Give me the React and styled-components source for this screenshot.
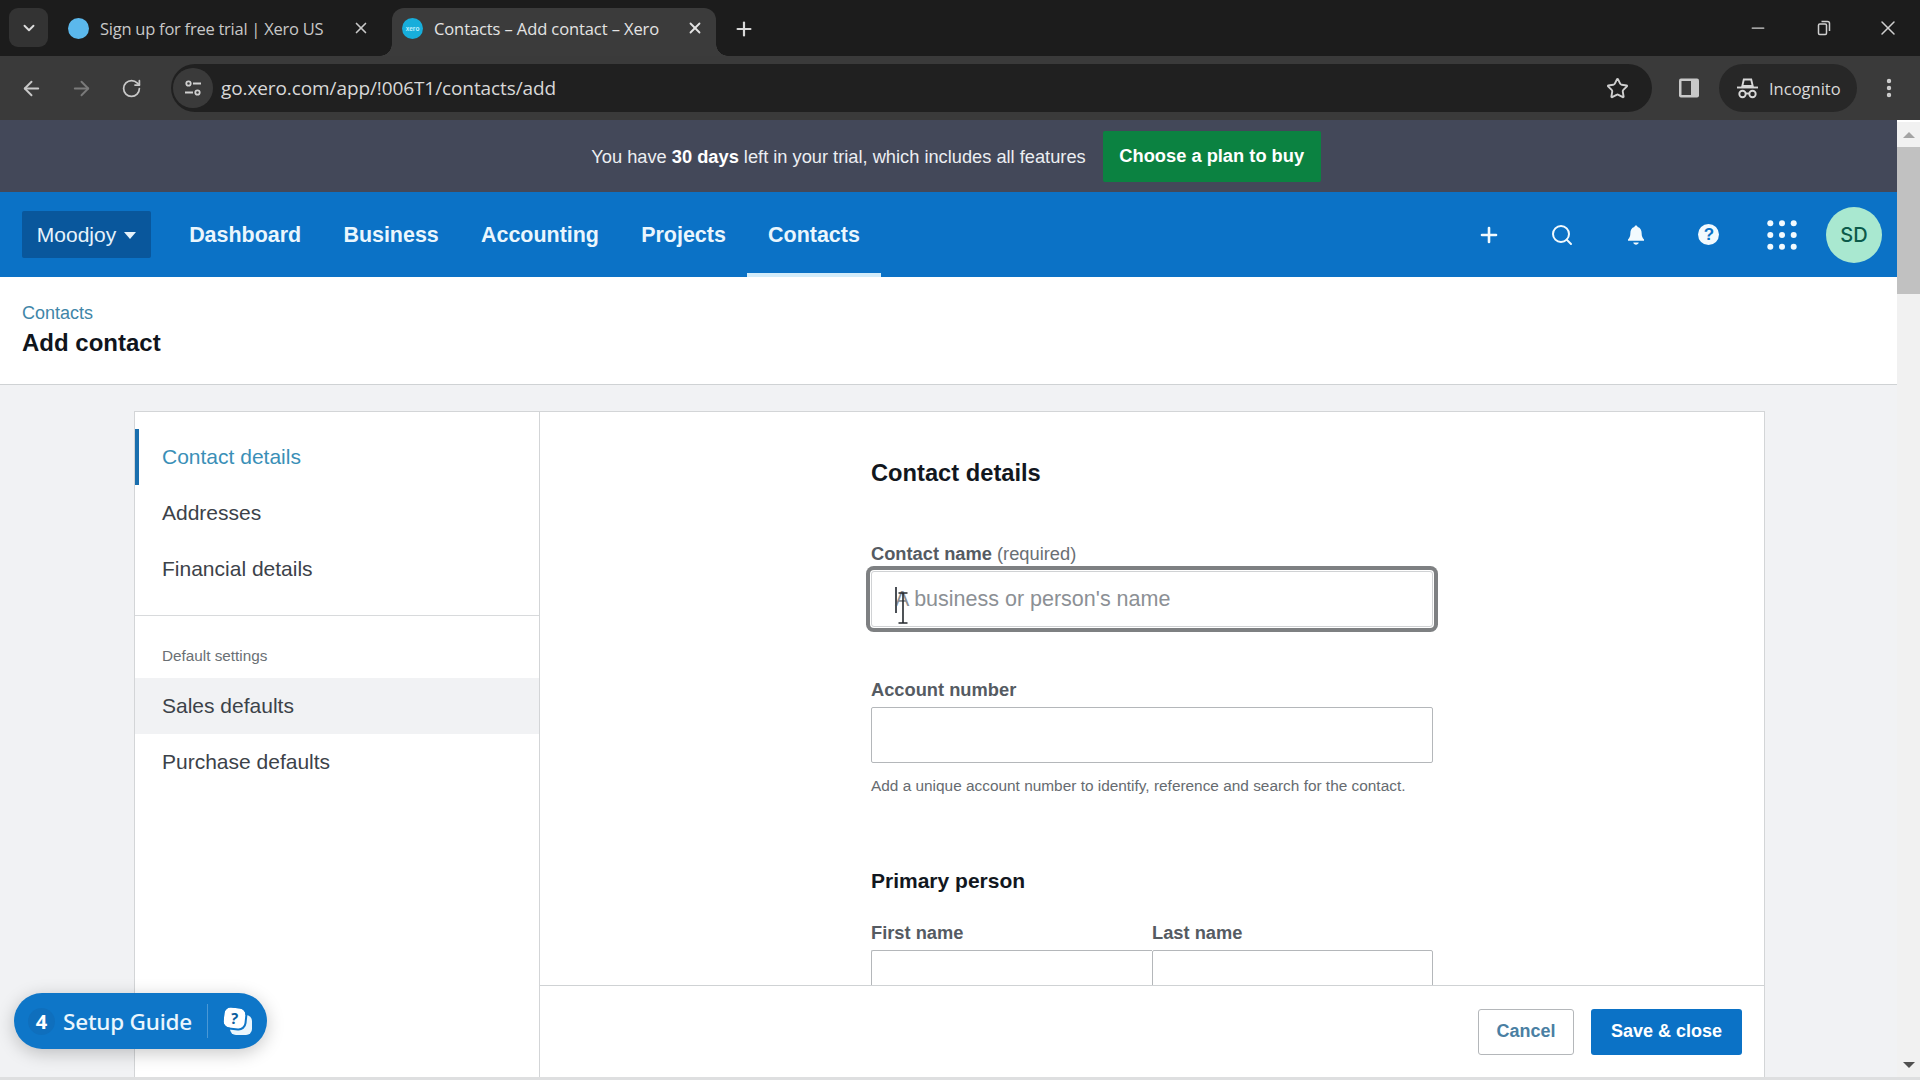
import styled, { createGlobalStyle } from 'styled-components';
import { ArrowLeft, ArrowRight, RotateCw, Star, X, Plus, Minus, ChevronDown, Search, EllipsisVertical } from 'lucide-react';

const GlobalStyle = createGlobalStyle`
  html, body { margin: 0; padding: 0; overflow: hidden; background: #fff; }
  * { box-sizing: border-box; }
`;

const Page = styled.div`
  width: 1920px;
  height: 1080px;
  display: flex;
  flex-direction: column;
  overflow: hidden;
  font-family: "Liberation Sans", Arial, sans-serif;
`;

/* browser chrome */
const TabStrip = styled.div`
  height: 56px;
  flex-shrink: 0;
  background: #1c1c1c;
  display: flex;
  align-items: flex-end;
  padding-left: 9px;
  color: #d4d4d4;
  font-family: "Open Sans", "Noto Sans", sans-serif;
`;

const TabMenu = styled.div`
  width: 39px;
  height: 39px;
  margin-bottom: 9px;
  border-radius: 9px;
  background: #333;
  display: flex;
  align-items: center;
  justify-content: center;
  color: #ddd;
`;

const Tab = styled.div`
  position: relative;
  width: 324px;
  height: 48px;
  display: flex;
  align-items: center;
  padding: 0 12px 8px 10px;
  margin-left: 10px;
  border-radius: 12px 12px 0 0;
  background: ${p => (p.$active ? '#3b3b3b' : 'transparent')};
  color: ${p => (p.$active ? '#e4e4e4' : '#c8c8c8')};
  ${p => p.$active && `
    &::before, &::after {
      content: '';
      position: absolute;
      bottom: 0;
      width: 12px;
      height: 12px;
    }
    &::before { left: -12px; background: radial-gradient(circle at 0 0, transparent 11.5px, #3b3b3b 12px); }
    &::after { right: -12px; background: radial-gradient(circle at 100% 0, transparent 11.5px, #3b3b3b 12px); }
  `}
`;

const Favicon = styled.span`
  width: 21px;
  height: 21px;
  border-radius: 50%;
  flex-shrink: 0;
  background: ${p => (p.$active ? '#17aedb' : '#5bb8ec')};
  color: #bfeefb;
  font-size: 6.5px;
  font-weight: 700;
  display: flex;
  align-items: center;
  justify-content: center;
  font-family: "Liberation Sans", sans-serif;
`;

const TabTitle = styled.span`
  flex: 1;
  margin-left: 11px;
  font-size: 16.5px;
  letter-spacing: ${p => (p.$active ? '-0.1px' : '-0.25px')};
  white-space: nowrap;
  overflow: hidden;
`;

const NewTab = styled.span`
  margin: 0 0 3px 17px;
  height: 48px;
  display: flex;
  align-items: center;
  color: #d8d8d8;
`;

const WindowControls = styled.div`
  margin-left: auto;
  height: 56px;
  display: flex;
  align-items: center;
  padding: 0 20px 0 0;
  gap: 44px;
  color: #cfcfcf;
`;

const RestoreIcon = () => (
  <svg width="20" height="20" viewBox="-2 0 20 20" fill="none" stroke="currentColor" strokeWidth="1.5">
    <rect x="4.500" y="6" width="8" height="10.500" rx="1.200" />
    <path d="M7.500 3.500h6a2 2 0 0 1 2 2v7.500" />
  </svg>
);

const Toolbar = styled.div`
  height: 64px;
  flex-shrink: 0;
  background: #3a3a3a;
  display: flex;
  align-items: center;
  color: #c4c4c4;
  font-family: "Open Sans", "Noto Sans", sans-serif;
`;

const NavIcon = styled.span`
  width: 50px;
  height: 40px;
  display: flex;
  align-items: center;
  justify-content: center;
  color: ${p => (p.$dim ? '#7a7a7a' : '#c8c8c8')};
`;

const NavIcons = styled.div`
  display: flex;
  padding-left: 6px;
`;

const AddressBar = styled.div`
  margin-left: 15px;
  width: 1481px;
  height: 48px;
  border-radius: 24px;
  background: #202020;
  display: flex;
  align-items: center;
  padding: 0 23px 0 2px;
`;

const SiteIcon = styled.span`
  width: 40px;
  height: 40px;
  border-radius: 50%;
  background: #3a3a3a;
  display: flex;
  align-items: center;
  justify-content: center;
  color: #d0d0d0;
`;

const UrlText = styled.span`
  margin-left: 8px;
  font-size: 19px;
  letter-spacing: -0.1px;
  color: #d8d8d8;
  flex: 1;
`;

const ToolbarIcon = styled.span`
  display: flex;
  align-items: center;
  justify-content: center;
  color: #cfcfcf;
  margin: ${p => p.$margin || '0'};
`;

const IncognitoPill = styled.div`
  margin-left: 19px;
  width: 138px;
  height: 48px;
  border-radius: 24px;
  background: #272727;
  display: flex;
  align-items: center;
  padding-left: 17px;
  gap: 10px;
  font-size: 16.5px;
  color: #dadada;
`;

const TuneIcon = () => (
  <svg width="20" height="20" viewBox="0 0 20 20" fill="none" stroke="currentColor" strokeWidth="1.8">
    <circle cx="5.500" cy="5.500" r="2.200" />
    <path d="M10 5.500h8M2 14.500h8" />
    <circle cx="14.500" cy="14.500" r="2.200" />
  </svg>
);

const SidePanelIcon = () => (
  <svg width="22" height="22" viewBox="0 0 22 22">
    <rect x="1" y="1.500" width="20" height="19" rx="2" fill="#c8c8c8" />
    <rect x="3.500" y="4" width="9.500" height="14" fill="#3a3a3a" />
  </svg>
);

const IncognitoIcon = () => (
  <svg width="23" height="23" viewBox="0 0 23 23" fill="none" stroke="#d8d8d8" strokeWidth="1.900">
    <path d="M7.800 2.500h7.400l1.500 6.500H6.300z" />
    <path d="M1 10.500h21" />
    <circle cx="6.500" cy="17" r="3.200" />
    <circle cx="16.500" cy="17" r="3.200" />
    <path d="M9.700 16.500h3.600" />
  </svg>
);

/* app */
const Viewport = styled.div`
  flex: 1;
  min-height: 0;
  display: flex;
`;

const AppColumn = styled.div`
  flex: 1;
  min-width: 0;
  display: flex;
  flex-direction: column;
  position: relative;
  border-bottom: 3px solid #dedfe0;
`;

const Banner = styled.div`
  height: 72px;
  flex-shrink: 0;
  background: #434859;
  display: flex;
  align-items: center;
  justify-content: center;
  gap: 17px;
  padding-left: 15px;
  color: #eceef2;
  font-size: 18.25px;
  span { padding-top: 2px; }
  b { font-weight: 700; color: #fff; }
`;

const PlanButton = styled.div`
  width: 218px;
  height: 51px;
  background: #0b8241;
  color: #fff;
  font-weight: 700;
  font-size: 18.3px;
  display: flex;
  align-items: center;
  justify-content: center;
  border-radius: 2px;
`;

const TopNav = styled.div`
  height: 85px;
  flex-shrink: 0;
  background: #0b72c6;
  display: flex;
  align-items: center;
  padding: 0 15px 0 22px;
  color: #fff;
`;

const OrgButton = styled.div`
  width: 129px;
  height: 47px;
  background: #09579c;
  border-radius: 2px;
  display: flex;
  align-items: center;
  justify-content: center;
  gap: 8px;
  margin-right: 17px;
  font-size: 21px;
  color: #e6f3fb;
`;

const Caret = styled.span`
  width: 0;
  height: 0;
  margin-top: 2px;
  border-left: 6.500px solid transparent;
  border-right: 6.500px solid transparent;
  border-top: 7px solid #e6f3fb;
`;

const NavItem = styled.div`
  height: 85px;
  padding: 2px 21.150px 0;
  display: flex;
  align-items: center;
  font-size: 21.450px;
  font-weight: 700;
  color: #eaf6fd;
  border-bottom: 4px solid ${p => (p.$active ? '#d3ecfa' : 'transparent')};
  border-top: 4px solid transparent;
`;

const NavActions = styled.div`
  margin-left: auto;
  display: flex;
  align-items: center;
`;

const ActionIcon = styled.span`
  width: 73.400px;
  height: 56px;
  display: flex;
  align-items: center;
  justify-content: center;
  color: #f2fafe;
`;

const HelpBadge = styled.span`
  width: 21px;
  height: 21px;
  border-radius: 50%;
  background: #f2fafe;
  color: #0b72c6;
  font-size: 17px;
  font-weight: 700;
  display: flex;
  align-items: center;
  justify-content: center;
`;

const Avatar = styled.span`
  width: 56px;
  height: 56px;
  margin-left: 7px;
  border-radius: 50%;
  background: #a9e8d0;
  color: #0c5a4a;
  font-family: Inter, "Liberation Sans", sans-serif;
  font-size: 20px;
  font-weight: 500;
  display: flex;
  align-items: center;
  justify-content: center;
`;

const BellIcon = () => (
  <svg width="20" height="24" viewBox="0 0 22 24" fill="currentColor">
    <path d="M11 1.500c1 0 1.700.7 1.800 1.700 3 .8 4.400 3.400 4.400 6.600 0 3.500.9 5.400 2.600 7.200v1.400H2.200V17c1.700-1.800 2.600-3.700 2.600-7.200 0-3.200 1.400-5.800 4.400-6.600.1-1 .8-1.700 1.800-1.700z" />
    <path d="M8 20.200h6c-.3 1.500-1.500 2.400-3 2.400s-2.700-.9-3-2.400z" />
  </svg>
);

const GridIcon = () => (
  <svg width="30" height="30" viewBox="0 0 30 30" fill="currentColor">
    {[3.300, 15, 26.700].flatMap(y => [3.300, 15, 26.700].map(x => <circle key={`${x}-${y}`} cx={x} cy={y} r="3" />))}
  </svg>
);

const PageHead = styled.div`
  height: 108px;
  flex-shrink: 0;
  background: #fff;
  border-bottom: 1px solid #cfd2d4;
  padding: 25px 22px 0;
`;

const Breadcrumb = styled.div`
  font-size: 18px;
  line-height: 22px;
  color: #3f86a8;
`;

const PageTitle = styled.h1`
  margin: 4px 0 0;
  font-size: 24px;
  line-height: 30px;
  font-weight: 700;
  color: #10151c;
`;

const Workspace = styled.div`
  flex: 1;
  min-height: 0;
  background: #f1f2f4;
  padding: 26px 132px 0 134px;
  display: flex;
`;

const Card = styled.div`
  flex: 1;
  min-width: 0;
  display: flex;
  background: #fff;
  border: 1px solid #d3d5d7;
  border-bottom: 0;
`;

const Sidebar = styled.nav`
  width: 405px;
  flex-shrink: 0;
  border-right: 1px solid #d3d5d7;
`;

const SideGroup = styled.div`
  padding: 17px 0 18px;
  border-bottom: 1px solid #d8dadc;
`;

const SideItem = styled.div`
  height: 56px;
  display: flex;
  align-items: center;
  padding-left: 23px;
  font-size: 21px;
  color: ${p => (p.$active ? '#3a8fb7' : '#3c4249')};
  background: ${p => (p.$hover ? '#f1f2f4' : 'transparent')};
  border-left: 4px solid ${p => (p.$active ? '#1a6fae' : 'transparent')};
`;

const SideHeading = styled.div`
  padding: 30px 0 0 27px;
  height: 62px;
  font-size: 15.300px;
  line-height: 20px;
  color: #6a6f74;
`;

const MainPane = styled.div`
  flex: 1;
  min-width: 0;
  display: flex;
  flex-direction: column;
`;

const FormScroll = styled.div`
  flex: 1;
  min-height: 0;
  overflow: hidden;
  padding: 46px 0 0 331px;
`;

const Form = styled.div`
  width: 562px;
`;

const SectionTitle = styled.h2`
  margin: ${p => p.$top || '0'} 0 0;
  font-size: ${p => p.$size || '23.7px'};
  line-height: 30px;
  font-weight: 700;
  color: #12171e;
`;

const Label = styled.div`
  margin: ${p => p.$top || '0'} 0 ${p => p.$bottom || '7px'};
  font-size: 18.300px;
  line-height: 22px;
  font-weight: 700;
  color: #555b62;
  span { font-weight: 400; color: #6a6f74; }
`;

const InputBox = styled.div`
  position: relative;
  height: 56px;
  display: flex;
  align-items: center;
  padding-left: 23px;
  background: #fff;
  border: 1px solid #b4b7ba;
  border-radius: 2px;
  font-size: 21.500px;
  color: #8c9095;
  ${p => p.$focused && 'box-shadow: 0 0 0 1px #fff, 0 0 0 5px #7e8082; border-radius: 3px; border-color: #d0d2d4;'}
`;

const Caretline = styled.span`
  position: absolute;
  left: 23px;
  top: 15px;
  width: 2px;
  height: 26px;
  background: #4a4f55;
`;

const IBeam = styled.svg`
  position: absolute;
  left: 25px;
  top: 20px;
`;

const Hint = styled.div`
  margin-top: 13px;
  font-size: 15.400px;
  line-height: 20px;
  color: #666b70;
`;

const NameLabels = styled.div`
  display: grid;
  grid-template-columns: 281px 281px;
  margin-top: 26px;
`;

const NameInputs = styled.div`
  display: grid;
  grid-template-columns: 281px 281px;
  ${InputBox}:first-child { border-right: 0; border-radius: 2px 0 0 2px; }
`;

const Footer = styled.div`
  height: 92px;
  flex-shrink: 0;
  background: #fff;
  border-top: 1px solid #cfd2d4;
  display: flex;
  align-items: center;
  justify-content: flex-end;
  gap: 17px;
  padding: 0 22px 0 0;
`;

const FooterButton = styled.div`
  height: 46px;
  width: ${p => (p.$primary ? '151px' : '96px')};
  border-radius: 3px;
  display: flex;
  align-items: center;
  justify-content: center;
  font-size: 18px;
  font-weight: 700;
  background: ${p => (p.$primary ? '#0b72c6' : '#fff')};
  color: ${p => (p.$primary ? '#fff' : '#4a7fa3')};
  border: ${p => (p.$primary ? '0' : '1.5px solid #b4b7ba')};
`;

const SetupGuide = styled.div`
  position: absolute;
  left: 14px;
  bottom: 28px;
  width: 253px;
  height: 56px;
  border-radius: 28px;
  background: #0e76c8;
  color: #eaf6fd;
  box-shadow: 0 4px 18px rgba(0, 0, 0, 0.22);
  display: flex;
  align-items: center;
  padding-left: 14px;
  font-family: "Noto Sans", sans-serif;
`;

const GuideCount = styled.span`
  width: 27px;
  height: 27px;
  border-radius: 50%;
  background: #0f6fbd;
  font-size: 20px;
  font-weight: 700;
  color: #fff;
  display: flex;
  align-items: center;
  justify-content: center;
`;

const GuideLabel = styled.span`
  margin-left: 8px;
  font-size: 22.500px;
  font-weight: 500;
  letter-spacing: -0.2px;
`;

const GuideDivider = styled.span`
  width: 1px;
  height: 34px;
  margin-left: 15px;
  background: rgba(255, 255, 255, 0.25);
`;

const GuideIconWrap = styled.span`
  position: relative;
  width: 28px;
  height: 27px;
  margin-left: 16px;
`;

const GuideBack = styled.span`
  position: absolute;
  left: 6px;
  top: 7px;
  width: 22px;
  height: 20px;
  border-radius: 6px;
  background: #eaf6fd;
`;

const GuideFront = styled.span`
  position: absolute;
  left: 0;
  top: 0;
  width: 21px;
  height: 20px;
  border-radius: 6px;
  background: #fff;
  outline: 2px solid #0e76c8;
  transform: rotate(6deg);
  color: #0e5f9f;
  font-size: 15px;
  font-weight: 700;
  display: flex;
  align-items: center;
  justify-content: center;
`;

const ScrollRail = styled.div`
  width: 23px;
  flex-shrink: 0;
  margin-top: 2px;
  background: #f1f1f1;
  border-bottom: 3px solid #dedfe0;
  display: flex;
  flex-direction: column;
  align-items: stretch;
`;

const ScrollArrow = styled.span`
  height: 25px;
  display: flex;
  align-items: center;
  justify-content: center;
  margin-top: ${p => (p.$down ? 'auto' : '0')};
  &::before {
    content: '';
    border-left: 6px solid transparent;
    border-right: 6px solid transparent;
    ${p => (p.$down ? 'border-top: 6px solid #505050;' : 'border-bottom: 6px solid #a3a3a3;')}
  }
`;

const ScrollThumb = styled.div`
  height: 147px;
  background: #c1c1c1;
`;

export default function App() {
  return (
    <Page>
      <GlobalStyle />
      <TabStrip>
        <TabMenu><ChevronDown size={18} strokeWidth={2.5} /></TabMenu>
        <Tab>
          <Favicon />
          <TabTitle>Sign up for free trial | Xero US</TabTitle>
          <X size={18} strokeWidth={2.2} />
        </Tab>
        <Tab $active>
          <Favicon $active>xero</Favicon>
          <TabTitle $active>Contacts – Add contact – Xero</TabTitle>
          <X size={18} strokeWidth={2.4} />
        </Tab>
        <NewTab><Plus size={22} strokeWidth={2.4} /></NewTab>
        <WindowControls>
          <Minus size={20} strokeWidth={1.5} />
          <RestoreIcon />
          <X size={24} strokeWidth={1.5} />
        </WindowControls>
      </TabStrip>
      <Toolbar>
        <NavIcons>
          <NavIcon><ArrowLeft size={23} strokeWidth={2} /></NavIcon>
          <NavIcon $dim><ArrowRight size={23} strokeWidth={2} /></NavIcon>
          <NavIcon><RotateCw size={21} strokeWidth={2} /></NavIcon>
        </NavIcons>
        <AddressBar>
          <SiteIcon><TuneIcon /></SiteIcon>
          <UrlText>go.xero.com/app/!006T1/contacts/add</UrlText>
          <Star size={23} strokeWidth={2} color="#cfcfcf" />
        </AddressBar>
        <ToolbarIcon $margin="0 0 0 26px"><SidePanelIcon /></ToolbarIcon>
        <IncognitoPill><IncognitoIcon />Incognito</IncognitoPill>
        <ToolbarIcon $margin="0 0 0 20px"><EllipsisVertical size={24} strokeWidth={2.4} /></ToolbarIcon>
      </Toolbar>
      <Viewport>
        <AppColumn>
          <Banner>
            <span>You have <b>30 days</b> left in your trial, which includes all features</span>
            <PlanButton>Choose a plan to buy</PlanButton>
          </Banner>
          <TopNav>
            <OrgButton>Moodjoy<Caret /></OrgButton>
            <NavItem>Dashboard</NavItem>
            <NavItem>Business</NavItem>
            <NavItem>Accounting</NavItem>
            <NavItem>Projects</NavItem>
            <NavItem $active>Contacts</NavItem>
            <NavActions>
              <ActionIcon><Plus size={24} strokeWidth={2.6} /></ActionIcon>
              <ActionIcon><Search size={24} strokeWidth={2} /></ActionIcon>
              <ActionIcon><BellIcon /></ActionIcon>
              <ActionIcon><HelpBadge>?</HelpBadge></ActionIcon>
              <ActionIcon><GridIcon /></ActionIcon>
              <Avatar>SD</Avatar>
            </NavActions>
          </TopNav>
          <PageHead>
            <Breadcrumb>Contacts</Breadcrumb>
            <PageTitle>Add contact</PageTitle>
          </PageHead>
          <Workspace>
            <Card>
              <Sidebar>
                <SideGroup>
                  <SideItem $active>Contact details</SideItem>
                  <SideItem>Addresses</SideItem>
                  <SideItem>Financial details</SideItem>
                </SideGroup>
                <SideHeading>Default settings</SideHeading>
                <SideItem $hover>Sales defaults</SideItem>
                <SideItem>Purchase defaults</SideItem>
              </Sidebar>
              <MainPane>
                <FormScroll>
                  <Form>
                    <SectionTitle>Contact details</SectionTitle>
                    <Label $top="55px" $bottom="6px">Contact name <span>(required)</span></Label>
                    <InputBox $focused>
                      A business or person's name
                      <Caretline />
                      <IBeam width="12" height="32" viewBox="0 0 12 32" fill="none" stroke="#24282d" strokeWidth="1.6">
                        <path d="M1.500 1h9M6 1v30M1.500 31h9" />
                      </IBeam>
                    </InputBox>
                    <Label $top="52px" $bottom="6px">Account number</Label>
                    <InputBox />
                    <Hint>Add a unique account number to identify, reference and search for the contact.</Hint>
                    <SectionTitle $top="70px" $size="21px">Primary person</SectionTitle>
                    <NameLabels>
                      <Label $bottom="6px">First name</Label>
                      <Label $bottom="6px">Last name</Label>
                    </NameLabels>
                    <NameInputs>
                      <InputBox />
                      <InputBox />
                    </NameInputs>
                  </Form>
                </FormScroll>
                <Footer>
                  <FooterButton>Cancel</FooterButton>
                  <FooterButton $primary>Save &amp; close</FooterButton>
                </Footer>
              </MainPane>
            </Card>
          </Workspace>
          <SetupGuide>
            <GuideCount>4</GuideCount>
            <GuideLabel>Setup Guide</GuideLabel>
            <GuideDivider />
            <GuideIconWrap>
              <GuideBack />
              <GuideFront>?</GuideFront>
            </GuideIconWrap>
          </SetupGuide>
        </AppColumn>
        <ScrollRail>
          <ScrollArrow />
          <ScrollThumb />
          <ScrollArrow $down />
        </ScrollRail>
      </Viewport>
    </Page>
  );
}
